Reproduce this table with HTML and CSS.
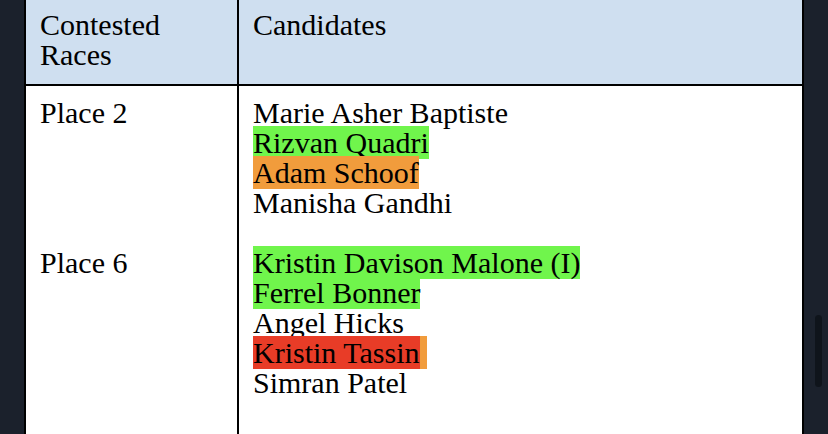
FILE: index.html
```html
<!DOCTYPE html>
<html lang="en">
<head>
<meta charset="utf-8">
<title>Contested Races</title>
<link rel="stylesheet" href="styles.css">
</head>
<body>
<table class="races">
  <thead>
    <tr>
      <th class="col-race">Contested Races</th>
      <th class="col-cand">Candidates</th>
    </tr>
  </thead>
  <tbody>
    <tr>
      <td class="col-race">Place 2<br><br><br><br><br>Place 6</td>
      <td class="col-cand">Marie Asher Baptiste<br><span class="win">Rizvan Quadri</span><br><span class="runoff">Adam Schoof</span><br>Manisha Gandhi<br><br><span class="win">Kristin Davison Malone (I)</span><br><span class="win">Ferrel Bonner</span><br>Angel Hicks<br><span class="lose">Kristin Tassin</span><span class="runoff">&nbsp;</span><br>Simran Patel</td>
    </tr>
  </tbody>
</table>
<div class="scroll-thumb"></div>
</body>
</html>
```

FILE: styles.css
```css
html {
  overflow: hidden;
}

body {
  margin: 0;
  background: #1b212c;
  font-family: "Liberation Serif", "Times New Roman", serif;
  font-size: 30px;
  line-height: 30px;
  color: #000;
}

.races {
  width: 780px;
  margin: -4px 0 0 24px;
  border-collapse: separate;
  border-spacing: 0;
  table-layout: fixed;
  background: #fff;
  border: 2px solid #000;
}

.races th,
.races td {
  text-align: left;
  font-weight: normal;
  vertical-align: top;
  padding: 12px 14px;
}

.races th {
  background: #cfdff0;
  padding-bottom: 14px;
  border-bottom: 2px solid #000;
}

.races td {
  padding-bottom: 80px;
}

.races th.col-race {
  width: 183px;
}

.races .col-cand {
  border-left: 2px solid #000;
  padding-left: 14px;
}

.win {
  background: #70f54c;
}

.runoff {
  background: #f19c3c;
}

.lose {
  background: #e83c27;
}

.scroll-thumb {
  position: fixed;
  right: 6px;
  top: 315px;
  width: 7px;
  height: 72px;
  border-radius: 4px;
  background: #0f141b;
}
```
